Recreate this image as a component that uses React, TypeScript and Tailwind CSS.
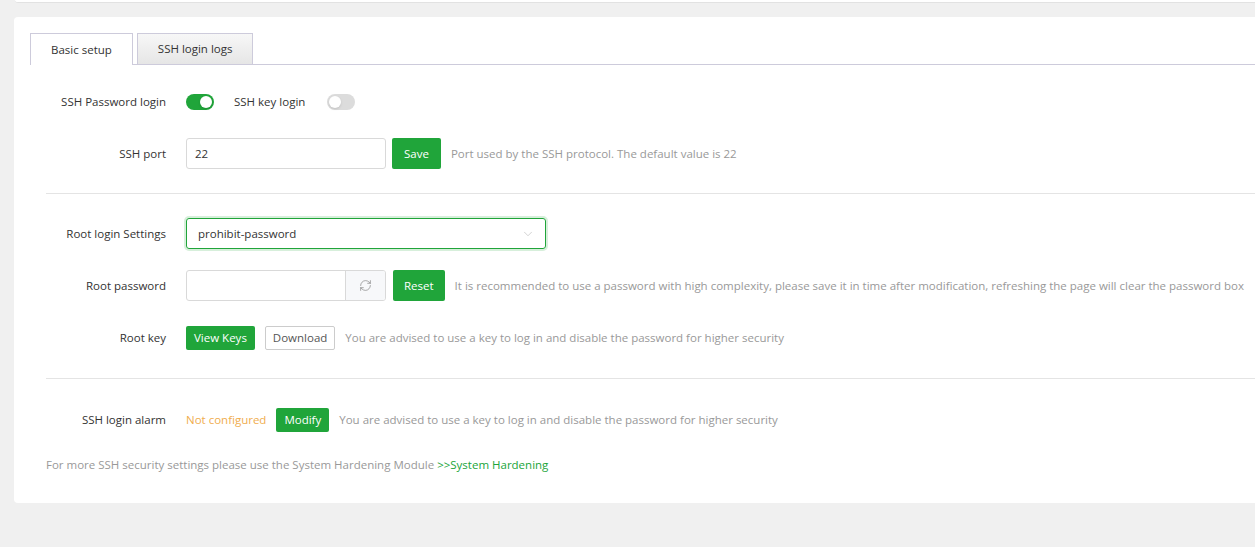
import { RefreshCw, ChevronDown } from "lucide-react";

const FONT = "font-['Open_Sans','Liberation_Sans',sans-serif]";

function Toggle({ on }: { on: boolean }) {
  return (
    <span
      className={`relative inline-block h-[16px] w-[28px] rounded-full ${on ? "bg-[#20a53a]" : "bg-[#dcdcdc]"}`}
    >
      <span
        className={`absolute top-[2px] h-[12px] w-[12px] rounded-full bg-white shadow-sm ${on ? "left-[14px]" : "left-[2px]"}`}
      />
    </span>
  );
}

function Row({ label, children }: { label: string; children: React.ReactNode }) {
  return (
    <div className="flex h-[31px] items-center">
      <div className="w-[140px] shrink-0 pr-[20px] text-right text-[#333]">{label}</div>
      <div className="flex items-center whitespace-nowrap">{children}</div>
    </div>
  );
}

function Help({ children }: { children: React.ReactNode }) {
  return <span className="ml-[10px] whitespace-nowrap text-[#999]">{children}</span>;
}

export default function App() {
  return (
    <div className={`h-[547px] w-[1255px] overflow-hidden bg-[#f0f0f0] text-[11.5px] ${FONT}`}>
      <div className="ml-[15px] h-[3px] rounded-bl-[4px] border-b border-[#e2e2e2] bg-white" />
      <div className="ml-[14px] mt-[14px] w-[1260px] rounded-[4px] bg-white pb-[30px] pl-[16px] pt-[16px]">
        {/* tabs */}
        <div className="flex h-[32px] items-end gap-[4px] border-b border-[#cdcbdb]">
          <div className="-mb-px flex h-[32px] items-center border border-b-0 border-[#cdcbdb] bg-white px-[20px] text-[#333]">
            Basic setup
          </div>
          <div className="-mb-px flex h-[32px] items-center border border-[#cdcbdb] bg-gradient-to-b from-[#f7f7f7] to-[#e6e6e6] px-[20px] text-[#333]">
            SSH login logs
          </div>
        </div>

        <div className="mt-[21px] flex flex-col pl-[16px]">
          <div className="flex flex-col gap-[21px]">
            <div className="flex h-[31px] items-center">
              <div className="w-[140px] shrink-0 pr-[20px] text-right text-[#333]">SSH Password login</div>
              <Toggle on />
              <span className="ml-[20px] text-[#333]">SSH key login</span>
              <span className="ml-[22px] flex">
                <Toggle on={false} />
              </span>
            </div>
            <Row label="SSH port">
              <div className="flex h-[31px] w-[200px] items-center rounded-[3px] border border-[#d9d9d9] px-[8px] text-[#333]">
                22
              </div>
              <button className="ml-[6px] h-[31px] rounded-[2px] bg-[#20a53a] px-[12px] text-white">Save</button>
              <Help>Port used by the SSH protocol. The default value is 22</Help>
            </Row>
          </div>

          <div className="my-[24px] h-px bg-[#e4e4e4]" />

          <div className="flex flex-col gap-[21px]">
            <Row label="Root login Settings">
              <div className="flex h-[31px] w-[360px] items-center justify-between rounded-[3px] border border-[#20a53a] pl-[11px] pr-[10px] text-[#333] shadow-[0_0_0_2px_rgba(32,165,58,0.18)]">
                <span>prohibit-password</span>
                <ChevronDown size={14} strokeWidth={1.2} className="text-[#c0c0c0]" />
              </div>
            </Row>
            <Row label="Root password">
              <div className="flex h-[31px] w-[200px] overflow-hidden rounded-[3px] border border-[#d9d9d9]">
                <div className="flex-1" />
                <div className="flex w-[40px] items-center justify-center border-l border-[#d9d9d9] bg-[#f7f8fa]">
                  <RefreshCw size={13} strokeWidth={1.3} className="text-[#888]" />
                </div>
              </div>
              <button className="ml-[7px] h-[31px] rounded-[2px] bg-[#20a53a] px-[11px] text-white">Reset</button>
              <Help>
                It is recommended to use a password with high complexity, please save it in time after modification,
                refreshing the page will clear the password box
              </Help>
            </Row>
            <Row label="Root key">
              <button className="h-[24px] rounded-[2px] bg-[#20a53a] px-[8px] text-white">View Keys</button>
              <button className="ml-[10px] h-[24px] rounded-[2px] border border-[#cccccc] bg-white px-[7px] text-[#555]">
                Download
              </button>
              <Help>You are advised to use a key to log in and disable the password for higher security</Help>
            </Row>
          </div>

          <div className="mb-[25px] mt-[25px] h-px bg-[#e4e4e4]" />

          <Row label="SSH login alarm">
            <span className="text-[#f0ad4e]">Not configured</span>
            <button className="ml-[10px] h-[24px] rounded-[2px] bg-[#20a53a] px-[8px] text-white">Modify</button>
            <Help>You are advised to use a key to log in and disable the password for higher security</Help>
          </Row>

          <div className="mt-[21px] text-[#999]">
            For more SSH security settings please use the System Hardening Module{" "}
            <span className="text-[#20a53a]">&gt;&gt;System Hardening</span>
          </div>
        </div>
      </div>
    </div>
  );
}
